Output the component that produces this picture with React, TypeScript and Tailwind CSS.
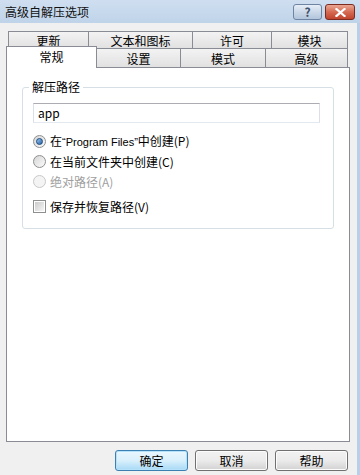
import React from 'react';

const backTabs = [
  { label: '更新', w: 'w-[81px]' },
  { label: '文本和图标', w: 'w-[105px]' },
  { label: '许可', w: 'w-[80px]' },
  { label: '模块', w: 'w-[77px]' },
];

const frontTabs = [
  { label: '设置', w: 'w-[85px]' },
  { label: '模式', w: 'w-[86px]' },
  { label: '高级', w: 'w-[83px]' },
];

function Radio({ checked, disabled }: { checked?: boolean; disabled?: boolean }) {
  return (
    <span
      className={`flex h-[13px] w-[13px] shrink-0 items-center justify-center rounded-full border ${
        disabled
          ? 'border-[#c9c9c9] bg-[#f4f4f4]'
          : 'border-[#8e8f8f] bg-gradient-to-br from-[#d6d6d6] to-[#fbfbfb]'
      }`}
    >
      {checked && (
        <span className="h-[7px] w-[7px] rounded-full border border-[#1c4a7c] bg-gradient-to-br from-[#95c7f0] to-[#2a62a8]" />
      )}
    </span>
  );
}

function Button({ label, primary }: { label: string; primary?: boolean }) {
  return (
    <button
      className={`flex h-[21px] w-[73px] items-center justify-center rounded-[3px] border text-[12px] text-black ${
        primary
          ? 'border-[#3c7fb1] bg-gradient-to-b from-[#eaf6fd] via-[#d9f0fc] to-[#a7d9f5] shadow-[inset_0_0_0_1px_#b5e2fa]'
          : 'border-[#707070] bg-gradient-to-b from-[#f2f2f2] via-[#ebebeb] to-[#d2d2d2] shadow-[inset_0_0_0_1px_#fcfcfc]'
      }`}
    >
      {label}
    </button>
  );
}

export default function App() {
  return (
    <div
      className="flex h-[475px] w-[360px] flex-col overflow-hidden bg-[#f0f0f0] text-[12px] leading-none text-black"
      style={{ fontFamily: '"Noto Sans CJK SC", "Noto Sans", sans-serif' }}
    >
      {/* Title bar */}
      <div className="flex h-[23px] shrink-0 items-center justify-between bg-gradient-to-b from-[#cfdff0] to-[#bfd3e9] pl-[5px] pr-[5px]">
        <span className="text-[12px] text-[#111]">高级自解压选项</span>
        <div className="flex items-center gap-[3px] pt-[1px]">
          <div className="flex h-[16px] w-[29px] items-center justify-center rounded-[3px] border border-[#6f84a2] bg-gradient-to-b from-[#e6eef7] via-[#cbd8e8] to-[#b2c5db] text-[12px] font-bold text-[#3d4f69]">
            ?
          </div>
          <div className="flex h-[16px] w-[30px] items-center justify-center rounded-[3px] border border-[#7d2b1f] bg-gradient-to-b from-[#e9a795] via-[#d56a52] to-[#c0432c]">
            <svg width="11" height="9" viewBox="0 0 11 9">
              <path d="M1.5 1l8 7M9.5 1l-8 7" stroke="#fff" strokeWidth="2.2" strokeLinecap="square" />
            </svg>
          </div>
        </div>
      </div>

      {/* Body */}
      <div className="flex flex-1 flex-col border-r-[3px] border-[#b7cfe9] pl-[6px] pr-[7px] pt-[8px]">
        {/* Tabs */}
        <div className="flex h-[18px] pl-[2px]">
          {backTabs.map((t, i) => (
            <div
              key={t.label}
              className={`${t.w} ${i > 0 ? '-ml-px' : ''} flex items-center justify-center border border-[#898c95] bg-gradient-to-b from-[#f3f3f3] to-[#e1e1e1] pt-[1px]`}
            >
              {t.label}
            </div>
          ))}
        </div>
        <div className="-mt-px flex h-[19px] items-end">
          <div className="relative z-10 -mb-px flex h-[22px] w-[91px] items-start justify-center border border-b-0 border-[#898c95] bg-white pt-[4px]">
            常规
          </div>
          {frontTabs.map((t) => (
            <div
              key={t.label}
              className={`${t.w} -ml-px flex h-[19px] items-center justify-center border border-b-0 border-[#898c95] bg-gradient-to-b from-[#f3f3f3] to-[#e1e1e1] pt-[2px]`}
            >
              {t.label}
            </div>
          ))}
        </div>

        {/* Panel */}
        <div className="h-[375px] w-[344px] border border-[#898c95] bg-white px-[15px] pt-[19px]">
          <div className="relative rounded-[3px] border border-[#d5dfe5] px-[10px] pb-[15px] pt-[15px]">
            <span className="absolute -top-[7px] left-[6px] bg-white px-[3px] text-[12px]">解压路径</span>
            <div className="flex h-[20px] w-[287px] items-center border border-[#abadb3] border-l-[#dbdfe6] border-r-[#dbdfe6] border-b-[#e3e9ef] pl-[4px] text-[12px]">
              app
            </div>
            <div className="mt-[12px] flex flex-col gap-[7px]">
              <div className="flex h-[13px] items-center gap-[4px]">
                <Radio checked />
                <span>
                  在
                  <span className="text-[11px]" style={{ fontFamily: '"Liberation Sans", sans-serif' }}>
                    “Program Files”
                  </span>
                  中创建(P)
                </span>
              </div>
              <div className="flex h-[13px] items-center gap-[4px]">
                <Radio />
                <span>在当前文件夹中创建(C)</span>
              </div>
              <div className="flex h-[13px] items-center gap-[4px]">
                <Radio disabled />
                <span className="text-[#a0a0a0]">绝对路径(A)</span>
              </div>
            </div>
            <div className="mt-[12px] flex h-[13px] items-center gap-[4px]">
              <span className="flex h-[13px] w-[13px] items-center justify-center border border-[#8e8f8f] bg-white">
                <span className="h-[9px] w-[9px] bg-gradient-to-br from-[#cbcbcb] to-[#f6f6f6]" />
              </span>
              <span>保存并恢复路径(V)</span>
            </div>
          </div>
        </div>

        {/* Buttons */}
        <div className="flex justify-end gap-[7px] pr-[2px] pt-[8px]">
          <Button label="确定" primary />
          <Button label="取消" />
          <Button label="帮助" />
        </div>
      </div>
    </div>
  );
}
